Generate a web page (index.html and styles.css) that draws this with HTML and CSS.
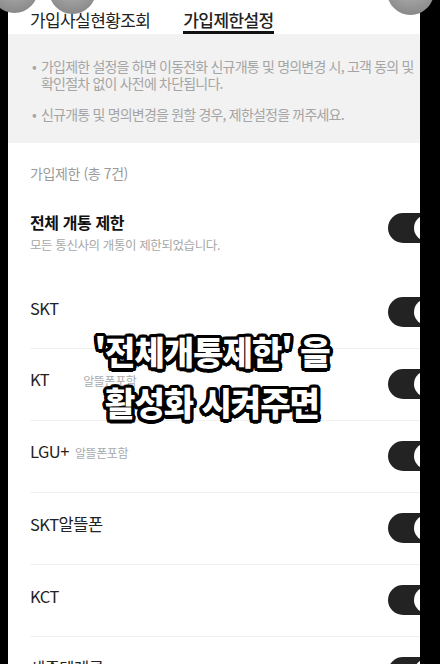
FILE: index.html
```html
<!DOCTYPE html>
<html lang="ko">
<head>
<meta charset="utf-8">
<link rel="stylesheet" href="styles.css">
</head>
<body>
<div class="screen">
  <div class="tabs">
    <div class="tab">가입사실현황조회</div>
    <div class="tab active">가입제한설정</div>
  </div>
  <div class="info">
    <div class="bullet"><span class="dot">•</span><span>가입제한 설정을 하면 이동전화 신규개통 및 명의변경 시, 고객 동의 및<br>확인절차 없이 사전에 차단됩니다.</span></div>
    <div class="bullet"><span class="dot">•</span><span>신규개통 및 명의변경을 원할 경우, 제한설정을 꺼주세요.</span></div>
  </div>
  <div class="list-head">가입제한 (총 7건)</div>
  <div class="row first">
    <div class="label-block">
      <div class="title">전체 개통 제한</div>
      <div class="desc">모든 통신사의 개통이 제한되었습니다.</div>
    </div>
    <div class="toggle first-toggle"><span class="knob"></span></div>
  </div>
  <div class="row">
    <div class="label">SKT</div>
    <div class="toggle"><span class="knob"></span></div>
  </div>
  <div class="row">
    <div class="label">KT<span class="sub sub-wide">알뜰폰포함</span></div>
    <div class="toggle"><span class="knob"></span></div>
  </div>
  <div class="row">
    <div class="label">LGU+<span class="sub">알뜰폰포함</span></div>
    <div class="toggle"><span class="knob"></span></div>
  </div>
  <div class="row">
    <div class="label">SKT알뜰폰</div>
    <div class="toggle"><span class="knob"></span></div>
  </div>
  <div class="row">
    <div class="label">KCT</div>
    <div class="toggle"><span class="knob"></span></div>
  </div>
  <div class="row">
    <div class="label">세종텔레콤</div>
    <div class="toggle"><span class="knob"></span></div>
  </div>
  <div class="caption">'전체개통제한' 을<br>활성화 시켜주면</div>
</div>
<div class="btn btn-a"></div>
<div class="btn btn-b"></div>
<div class="btn btn-c"></div>
</body>
</html>
```
FILE: styles.css
```css
html, body {
  margin: 0;
  padding: 0;
  background: #000;
  width: 440px;
  height: 664px;
  overflow: hidden;
  position: relative;
  font-family: "Noto Sans CJK KR", "Noto Sans", sans-serif;
}

.screen {
  position: relative;
  width: 412px;
  height: 664px;
  margin-left: 8px;
  background: #fff;
  overflow: hidden;
  color: #222;
}

.tabs {
  display: flex;
  gap: 33px;
  padding-left: 22px;
  height: 34px;
  box-sizing: border-box;
}

.tab {
  font-size: 17px;
  letter-spacing: -0.6px;
  line-height: 22px;
  padding-top: 9px;
  color: #222;
  border-bottom: 3px solid transparent;
}

.tab.active {
  font-weight: 500;
  border-bottom-color: #111;
}

.info {
  background: #f2f2f2;
  height: 109px;
  box-sizing: border-box;
  padding: 24px 0 0 24px;
  display: flex;
  flex-direction: column;
  gap: 14px;
}

.bullet {
  display: flex;
  font-size: 14px;
  line-height: 17px;
  letter-spacing: -0.8px;
  color: #a5a5a5;
  white-space: nowrap;
}

.dot {
  width: 9px;
  flex: none;
}

.list-head {
  padding: 20px 0 0 22px;
  font-size: 14px;
  line-height: 20px;
  letter-spacing: -0.4px;
  color: #9a9a9a;
}

.row {
  display: flex;
  align-items: center;
  justify-content: space-between;
  margin-left: 22px;
  height: 72px;
  box-sizing: border-box;
  border-bottom: 1px solid #f1f1f1;
}

.row.first {
  height: auto;
  align-items: center;
  padding: 28px 0 23px;
  border-bottom: none;
}

.title {
  font-size: 16px;
  font-weight: 700;
  line-height: 22px;
  letter-spacing: -0.4px;
  color: #111;
}

.desc {
  margin-top: 3px;
  font-size: 12.5px;
  line-height: 18px;
  letter-spacing: -0.4px;
  color: #a8a8a8;
}

.label {
  font-size: 16.5px;
  line-height: 22px;
  letter-spacing: -0.5px;
  color: #222;
  padding-bottom: 10px;
  display: flex;
  align-items: baseline;
}

.sub {
  margin-left: 6px;
  font-size: 12px;
  letter-spacing: -0.4px;
  color: #aaa;
}

.sub-wide {
  margin-left: 34px;
}

.toggle {
  position: relative;
  flex: none;
  width: 54px;
  height: 30px;
  border-radius: 15px;
  background: #232323;
  margin-right: -22px;
  margin-bottom: 2px;
}

.first-toggle {
  margin-bottom: 9px;
}

.knob {
  position: absolute;
  right: 2px;
  top: 2px;
  width: 26px;
  height: 26px;
  border-radius: 50%;
  background: #fff;
}

.caption {
  position: absolute;
  left: 0;
  right: 4px;
  top: 326px;
  text-align: center;
  font-size: 33px;
  font-weight: 900;
  line-height: 51px;
  letter-spacing: -1px;
  color: #fff;
  text-shadow:
    3.5px 0 0 #000, -3.5px 0 0 #000, 0 3.5px 0 #000, 0 -3.5px 0 #000,
    2.5px 2.5px 0 #000, -2.5px 2.5px 0 #000, 2.5px -2.5px 0 #000, -2.5px -2.5px 0 #000,
    3px 1.5px 0 #000, -3px 1.5px 0 #000, 3px -1.5px 0 #000, -3px -1.5px 0 #000,
    1.5px 3px 0 #000, -1.5px 3px 0 #000, 1.5px -3px 0 #000, -1.5px -3px 0 #000;
}

.btn {
  position: absolute;
  width: 47px;
  height: 47px;
  border-radius: 50%;
  background: radial-gradient(circle at 50% 30%, #c4c4c4 0%, #9a9a9a 55%, #7c7c7c 100%);
}

.btn-a {
  left: -9px;
  top: -34px;
}

.btn-b {
  left: 49px;
  top: -33px;
}

.btn-c {
  left: 387px;
  top: -32px;
}
```
